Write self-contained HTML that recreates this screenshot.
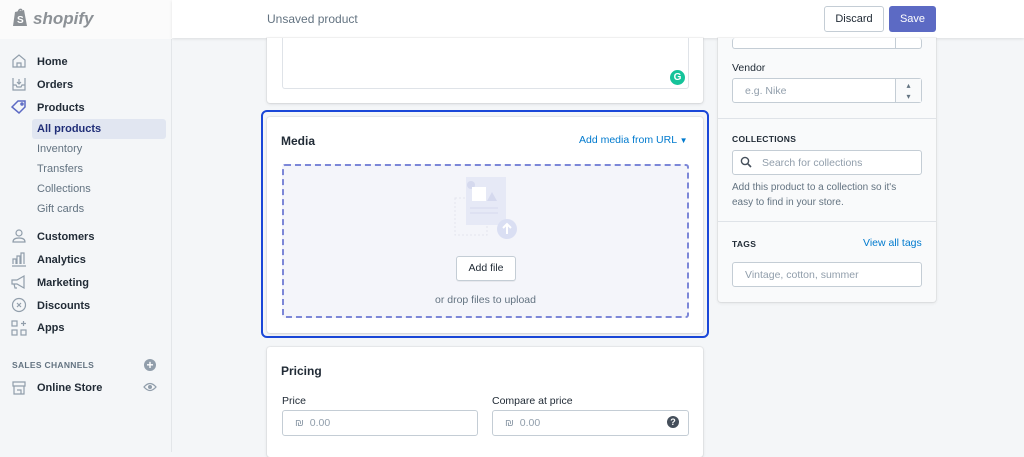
<!DOCTYPE html>
<html><head><meta charset="utf-8"><style>
*{box-sizing:border-box;margin:0;padding:0}
body{width:1024px;height:452px;overflow:hidden;background:#f4f6f8;font-family:"Liberation Sans",sans-serif;color:#212b36;position:relative;font-size:11px}
.abs{position:absolute}
.side{left:0;top:0;width:172px;height:452px;background:#f4f6f8;border-right:1px solid #e3e6e9}
.nav{left:37px;font-size:11px;color:#212b36;font-weight:bold}
.sub{left:37px;font-size:11px;color:#637381}
.ico{left:11px;width:16px;height:16px}
.card{background:#fff;border-radius:3px;box-shadow:0 0 0 1px rgba(63,63,68,.05),0 1px 3px rgba(63,63,68,.15)}
.inp{border:1px solid #c4cdd5;border-radius:3px;background:#fff;color:#919eab;font-size:10.5px;padding-left:12px;display:flex;align-items:center}
.lbl{font-size:10.5px;color:#212b36}
</style></head><body>
<div class="abs side"></div>
<div class="abs" style="left:0;top:0;width:172px;height:39px;background:#fbfbfb"></div>
<svg class="abs" style="left:11px;top:7px" width="20" height="22" viewBox="0 0 20 22"><path d="M4 5 L13 3 L16 19 L2 19 Z" fill="#8c9196"/><path d="M7 6 Q8 1 11 3" stroke="#8c9196" fill="none" stroke-width="1.5"/><text x="6" y="16" font-size="10" fill="#fff" font-weight="bold" font-family="Liberation Sans">S</text></svg>
<div class="abs" style="left:33px;top:9px;font-size:17px;font-weight:bold;font-style:italic;color:#8c9196">shopify</div>

<!-- nav icons -->
<svg class="abs ico" style="top:53px" viewBox="0 0 16 16" fill="none" stroke="#919eab" stroke-width="1.2"><path d="M2 7 L8 2 L14 7 V14 H2 Z M6 14 V10 H10 V14"/></svg>
<svg class="abs ico" style="top:76px" viewBox="0 0 16 16" fill="none" stroke="#919eab" stroke-width="1.2"><path d="M2 2 V14 H14 V2 M2 9 H5 L6 11 H10 L11 9 H14 M8 3 V8 M6 6 L8 8 L10 6"/></svg>
<svg class="abs ico" style="top:99px" viewBox="0 0 16 16" fill="none" stroke="#5c6ac4" stroke-width="1.5"><path d="M1 8 L7 2 H14 V8 L8 14 Z"/><circle cx="11" cy="5" r="1"/></svg>
<svg class="abs ico" style="top:228px" viewBox="0 0 16 16" fill="none" stroke="#919eab" stroke-width="1.2"><circle cx="8" cy="5" r="3"/><path d="M2 14 Q2 10 8 10 Q14 10 14 14 Z"/></svg>
<svg class="abs ico" style="top:251px" viewBox="0 0 16 16" fill="none" stroke="#919eab" stroke-width="1.2"><path d="M1 15 H15 M2 13 V8 H5 V13 M6 13 V5 H9 V13 M10 13 V2 H13 V13"/></svg>
<svg class="abs ico" style="top:274px" viewBox="0 0 16 16" fill="none" stroke="#919eab" stroke-width="1.2"><path d="M1 6 H6 L13 2 V14 L6 10 H1 Z M3 10 L4 14 H6"/></svg>
<svg class="abs ico" style="top:297px" viewBox="0 0 16 16" fill="none" stroke="#919eab" stroke-width="1.2"><circle cx="8" cy="8" r="6.5"/><path d="M6 6 L10 10 M10 6 L6 10"/></svg>
<svg class="abs ico" style="top:320px" viewBox="0 0 16 16" fill="none" stroke="#919eab" stroke-width="1.2"><rect x="1" y="1" width="5" height="5"/><rect x="1" y="10" width="5" height="5"/><rect x="10" y="10" width="5" height="5"/><path d="M12.5 1 V6 M10 3.5 H15"/></svg>
<svg class="abs ico" style="top:380px" viewBox="0 0 16 16" fill="none" stroke="#919eab" stroke-width="1.2"><path d="M2 2 H14 V6 H2 Z M3 6 V14 H13 V6 M6 10 H10 V14"/></svg>

<div class="abs nav" style="top:56px">Home</div>
<div class="abs nav" style="top:79px">Orders</div>
<div class="abs nav" style="top:102px">Products</div>
<div class="abs" style="left:32px;top:119px;width:134px;height:20px;background:#e1e6f1;border-radius:3px"></div>
<div class="abs nav" style="top:123px;color:#202e78">All products</div>
<div class="abs sub" style="top:143px">Inventory</div>
<div class="abs sub" style="top:163px">Transfers</div>
<div class="abs sub" style="top:183px">Collections</div>
<div class="abs sub" style="top:203px">Gift cards</div>
<div class="abs nav" style="top:231px">Customers</div>
<div class="abs nav" style="top:254px">Analytics</div>
<div class="abs nav" style="top:277px">Marketing</div>
<div class="abs nav" style="top:300px">Discounts</div>
<div class="abs nav" style="top:322px">Apps</div>
<div class="abs" style="left:12px;top:360px;font-size:8.5px;font-weight:bold;color:#637381;letter-spacing:.3px">SALES CHANNELS</div>
<div class="abs" style="left:144px;top:359px;width:12px;height:12px;border-radius:50%;background:#919eab;color:#fff;font-size:12px;line-height:12px;text-align:center;font-weight:bold">+</div>
<div class="abs nav" style="top:382px">Online Store</div>
<svg class="abs" style="left:143px;top:382px" width="14" height="10" viewBox="0 0 14 10"><path d="M1 5 Q7 -2 13 5 Q7 12 1 5Z" fill="none" stroke="#919eab" stroke-width="1.3"/><circle cx="7" cy="5" r="2" fill="#919eab"/></svg>

<!-- header -->
<div class="abs" style="left:172px;top:0;width:852px;height:38px;background:#fff;box-shadow:0 1px 3px rgba(0,0,0,.1)"></div>
<div class="abs" style="left:267px;top:12px;font-size:12px;color:#637381">Unsaved product</div>
<div class="abs" style="left:824px;top:6px;width:60px;height:26px;border:1px solid #c4cdd5;border-radius:3px;background:#fff;font-size:11px;text-align:center;line-height:24px;color:#212b36">Discard</div>
<div class="abs" style="left:889px;top:6px;width:47px;height:26px;border-radius:3px;background:#5c6ac4;color:#fff;font-size:11px;text-align:center;line-height:26px">Save</div>

<!-- top card -->
<div class="abs card" style="left:267px;top:38px;width:436px;height:65px;border-radius:0 0 3px 3px"></div>
<div class="abs" style="left:282px;top:38px;width:407px;height:51px;border:1px solid #dfe3e8;border-top:none;border-radius:0 0 3px 3px"></div>
<div class="abs" style="left:670px;top:70px;width:15px;height:15px;border-radius:50%;background:#15c39a;color:#fff;font-size:10px;font-weight:bold;text-align:center;line-height:15px">G</div>

<!-- media -->
<div class="abs" style="left:261px;top:110px;width:448px;height:228px;border:2px solid #1a47d8;border-radius:6px"></div>
<div class="abs card" style="left:267px;top:117px;width:436px;height:216px"></div>
<div class="abs" style="left:281px;top:134px;font-size:12px;font-weight:bold">Media</div>
<div class="abs" style="left:579px;top:134px;font-size:10.5px;color:#007ace">Add media from URL <span style="font-size:8px">▼</span></div>
<div class="abs" style="left:282px;top:164px;width:407px;height:154px;border:2px dashed #7c87d8;border-radius:3px;background:#f4f5fa"></div>
<svg class="abs" style="left:454px;top:176px" width="66" height="64" viewBox="0 0 66 64"><rect x="1" y="22" width="32" height="37" fill="none" stroke="#e3e5ee" stroke-dasharray="2 2"/><rect x="12" y="1" width="40" height="48" fill="#e6e9f6"/><circle cx="17" cy="9" r="4" fill="#d5d9ee"/><rect x="18" y="11" width="14" height="14" fill="#fff"/><path d="M33 25 L38 16 L43 25 Z" fill="#d5d9ee"/><path d="M16 32 H44 M16 37 H44" stroke="#d5d9ee"/><circle cx="53" cy="53" r="10" fill="#dadff3"/><path d="M53 58 V48 M49 52 L53 48 L57 52" stroke="#fff" stroke-width="2" fill="none"/></svg>
<div class="abs" style="left:456px;top:256px;width:60px;height:25px;border:1px solid #c4cdd5;border-radius:3px;background:#fff;font-size:10.5px;text-align:center;line-height:23px;box-shadow:0 1px 0 rgba(0,0,0,.05)">Add file</div>
<div class="abs" style="left:282px;top:294px;width:407px;text-align:center;font-size:10.5px;color:#637381">or drop files to upload</div>

<!-- pricing -->
<div class="abs card" style="left:267px;top:347px;width:436px;height:110px"></div>
<div class="abs" style="left:281px;top:364px;font-size:12px;font-weight:bold">Pricing</div>
<div class="abs lbl" style="left:282px;top:395px">Price</div>
<div class="abs lbl" style="left:492px;top:395px">Compare at price</div>
<div class="abs inp" style="left:282px;top:410px;width:196px;height:26px">₪&nbsp;&nbsp;0.00</div>
<div class="abs inp" style="left:492px;top:410px;width:197px;height:26px">₪&nbsp;&nbsp;0.00</div>
<div class="abs" style="left:667px;top:416px;width:12px;height:12px;border-radius:50%;background:#454f5b;color:#fff;font-size:9px;font-weight:bold;text-align:center;line-height:12px">?</div>

<!-- right card -->
<div class="abs" style="left:718px;top:38px;width:218px;height:264px;background:#f9fafb;border-radius:0 0 3px 3px;box-shadow:0 0 0 1px rgba(63,63,68,.06),0 1px 3px rgba(63,63,68,.12)"></div>
<div class="abs inp" style="left:732px;top:38px;width:190px;height:11px;border-top:none"></div>
<div class="abs" style="left:895px;top:38px;width:1px;height:11px;background:#c4cdd5"></div>
<div class="abs lbl" style="left:732px;top:62px">Vendor</div>
<div class="abs inp" style="left:732px;top:78px;width:190px;height:25px">e.g. Nike</div>
<div class="abs" style="left:895px;top:79px;width:26px;height:23px;border-left:1px solid #c4cdd5;background:#f9fafb;font-size:8px;color:#637381;text-align:center;line-height:11px;padding-top:1px">▴<br>▾</div>
<div class="abs" style="left:718px;top:118px;width:218px;height:1px;background:#dfe3e8"></div>
<div class="abs" style="left:732px;top:134px;font-size:8.5px;font-weight:bold;letter-spacing:.3px">COLLECTIONS</div>
<div class="abs inp" style="left:732px;top:150px;width:190px;height:25px;padding-left:29px">Search for collections</div>
<svg class="abs" style="left:740px;top:156px" width="12" height="12" viewBox="0 0 12 12"><circle cx="5" cy="5" r="3.6" fill="none" stroke="#454f5b" stroke-width="1.4"/><path d="M7.6 7.6 L11 11" stroke="#454f5b" stroke-width="1.6"/></svg>
<div class="abs" style="left:732px;top:180px;font-size:10px;color:#637381;line-height:15px">Add this product to a collection so it's<br>easy to find in your store.</div>
<div class="abs" style="left:718px;top:221px;width:218px;height:1px;background:#dfe3e8"></div>
<div class="abs" style="left:732px;top:239px;font-size:8.5px;font-weight:bold;letter-spacing:.3px">TAGS</div>
<div class="abs" style="left:863px;top:237px;font-size:10.5px;color:#007ace">View all tags</div>
<div class="abs inp" style="left:732px;top:262px;width:190px;height:25px">Vintage, cotton, summer</div>
</body></html>
